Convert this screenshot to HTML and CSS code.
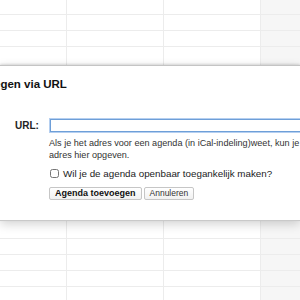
FILE: index.html
```html
<!DOCTYPE html>
<html lang="nl">
<head>
    <meta charset="UTF-8">
    <title>Agenda toevoegen via URL</title>
    <link rel="stylesheet" href="styles.css">
</head>
<body>

    <!-- calendar grid above the dialog -->
    <div class="grid top">
        <div class="row first"><span></span><span></span><span></span><span class="side"></span></div>
        <div class="row"><span></span><span></span><span></span><span class="side"></span></div>
        <div class="row"><span></span><span></span><span></span><span class="side"></span></div>
        <div class="row last"><span></span><span></span><span></span><span class="side"></span></div>
    </div>

    <div class="dialog">
        <h1 class="dialog-title">Agenda toevoegen via URL</h1>

        <div class="field">
            <label class="field-label" for="urlInput">URL:</label>
            <input type="text" id="urlInput" class="url-input">
        </div>

        <div class="field-body">
            <p class="help">Als je het adres voor een agenda (in iCal-indeling)weet, kun je dit adres hier opgeven.</p>

            <label class="check">
                <input type="checkbox">
                Wil je de agenda openbaar toegankelijk maken?
            </label>

            <div class="buttons">
                <button class="primary">Agenda toevoegen</button>
                <button>Annuleren</button>
            </div>
        </div>
    </div>

    <!-- calendar grid below the dialog -->
    <div class="grid bottom">
        <div class="row first"><span></span><span></span><span></span><span class="side"></span></div>
        <div class="row"><span></span><span></span><span></span><span class="side"></span></div>
        <div class="row"><span></span><span></span><span></span><span class="side"></span></div>
        <div class="row"><span></span><span></span><span></span><span class="side"></span></div>
        <div class="row"><span></span><span></span><span></span><span class="side"></span></div>
    </div>

</body>
</html>
```

FILE: styles.css
```css
body {
    margin: 0;
    font-family: "Liberation Sans", Arial, sans-serif;
    background-color: #fff;
    color: #222;
    overflow: hidden;
}
.grid .row {
    display: flex;
    height: 16px;
}
.grid .row span {
    border-right: 1px solid #ececec;
    border-bottom: 1px solid #ececec;
}
.grid .row span:nth-child(1) {
    width: 66px;
}
.grid .row span:nth-child(2),
.grid .row span:nth-child(3) {
    width: 96px;
}
.grid .row span.side {
    flex: 1;
    border-right: none;
    background-color: #f6f6f6;
}
.top .row.first {
    height: 15px;
}
.top .row.last {
    height: 18px;
}
.top .row.last span {
    border-bottom: none;
}
.bottom .row.first {
    height: 18px;
}
.dialog {
    position: relative;
    height: 154px;
    background-color: #fff;
    border-top: 1px solid #c4c4c4;
    border-bottom: 1px solid #c9c9c9;
    box-shadow: 0 -1px 2px rgba(0, 0, 0, 0.12), 0 3px 10px rgba(0, 0, 0, 0.18);
    overflow: hidden;
}
.dialog-title {
    margin: 0 0 0 -82px;
    padding-top: 11px;
    font-size: 11.5px;
    line-height: 14px;
    font-weight: bold;
    color: #111;
    white-space: nowrap;
}
.field {
    display: flex;
    align-items: center;
    margin-top: 28px;
}
.field-label {
    width: 50px;
    flex-shrink: 0;
    padding-left: 15px;
    box-sizing: border-box;
    font-size: 10px;
    font-weight: bold;
    color: #222;
}
.url-input {
    width: 280px;
    height: 11px;
    margin: 0;
    padding: 0 3px;
    border: 1px solid #6e9fd8;
    box-shadow: 0 0 0 1px #b5cff0;
    outline: none;
    flex-shrink: 0;
}
.field-body {
    padding-left: 49px;
    white-space: nowrap;
}
.help {
    margin: 5px 0 0;
    width: 270px;
    white-space: normal;
    font-size: 9.1px;
    line-height: 12px;
    color: #333;
}
.check {
    display: flex;
    align-items: center;
    height: 12px;
    margin-top: 6px;
    font-size: 9.8px;
    color: #222;
}
.check input {
    width: 9px;
    height: 9px;
    margin: 0 4px 0 1px;
}
.buttons {
    display: flex;
    gap: 2px;
    margin-top: 8px;
}
.buttons button {
    height: 13px;
    padding: 0 5px;
    font-family: "Liberation Sans", Arial, sans-serif;
    font-size: 8.5px;
    line-height: 11px;
    color: #333;
    background: linear-gradient(#fff, #f1f1f1);
    border: 1px solid #c6c6c6;
    border-radius: 2px;
}
.buttons button.primary {
    padding: 0 5px;
    font-size: 9px;
    font-weight: bold;
    color: #111;
}
```
